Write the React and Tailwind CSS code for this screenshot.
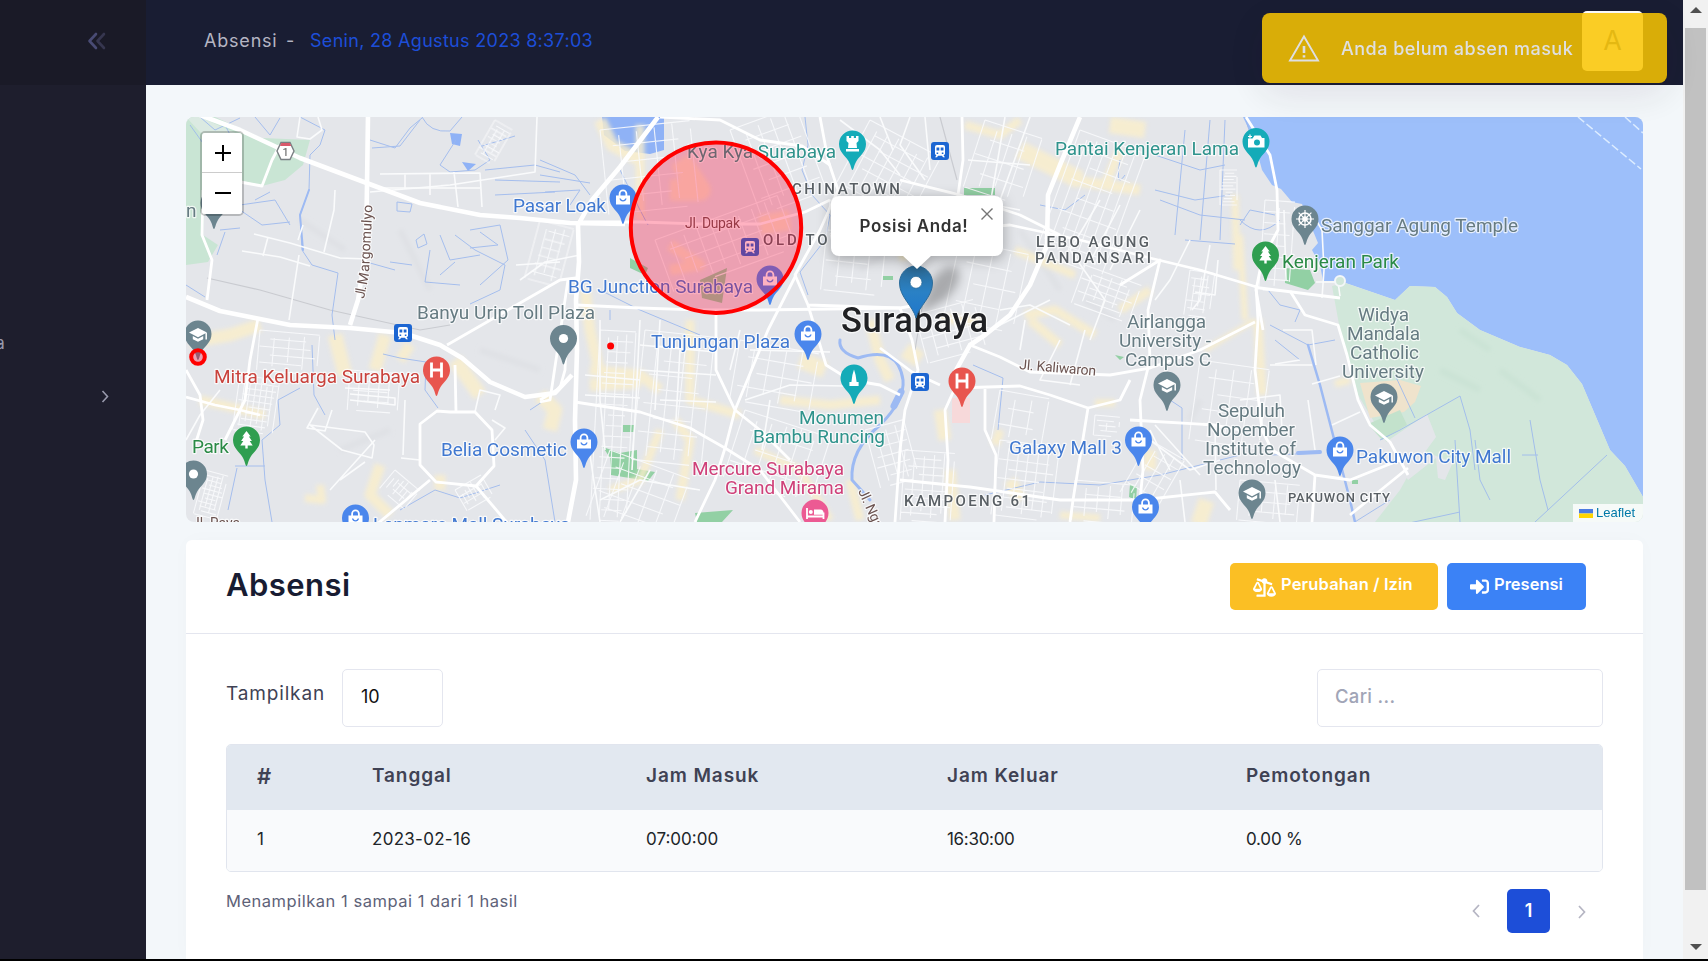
import React from "react";
import { FaBalanceScaleRight, FaSignInAlt } from "react-icons/fa";

/* ---------- map data ---------- */
const COLORS = {
  shop: "#4a86ec",
  teal: "#14abb8",
  red: "#e8554e",
  green: "#2f9e50",
  gray: "#6c858f",
  pink: "#ec5a93",
};

const PINS = [
  [214, 203, "gray", "dot"],
  [623, 198, "shop", "bag"],
  [770, 279, "shop", "bag"],
  [808, 334, "shop", "bag"],
  [584, 442, "shop", "bag"],
  [1138.5, 440, "shop", "bag"],
  [1145.5, 507, "shop", "bag"],
  [1340, 450, "shop", "bag"],
  [355.5, 518, "shop", "bag"],
  [852.5, 144, "teal", "castle"],
  [854, 378, "teal", "tower"],
  [1256, 141.5, "teal", "camera"],
  [436.5, 370, "red", "h"],
  [962, 381, "red", "h"],
  [246.5, 440, "green", "tree"],
  [1265.5, 255, "green", "tree"],
  [563.5, 338.5, "gray", "dot"],
  [193.5, 474, "gray", "dot"],
  [198, 334, "gray", "grad"],
  [1167, 385, "gray", "grad"],
  [1252, 493, "gray", "grad"],
  [1384, 397, "gray", "grad"],
  [1305, 219, "gray", "wheel"],
  [815, 513, "pink", "bed"],
];

const BLUE = "#4078d0";
const TEAL = "#2f938c";
const GRAY = "#667b82";
const DARK = "#595f64";

/* text, x, baseline, width, size, colour, weight */
const LABELS = [
  ["Pasar Loak", 513, 211.5, 93, 19, BLUE, 400],
  ["Kya Kya Surabaya", 687, 157.5, 149, 19, TEAL, 400],
  ["CHINATOWN", 792, 194, 108, 15, DARK, 500],
  ["OLD TOWN", 763, 245, 94, 15, DARK, 500],
  ["Jl. Dupak", 685, 228, 55, 14, "#6b5350", 400],
  ["BG Junction Surabaya", 568, 292.5, 185, 19, BLUE, 400],
  ["Banyu Urip Toll Plaza", 417, 319, 178, 19, GRAY, 400],
  ["Tunjungan Plaza", 651, 348, 139, 19, BLUE, 400],
  ["Monumen", 799, 423.5, 85, 19, TEAL, 400],
  ["Bambu Runcing", 753, 442.5, 132, 19, TEAL, 400],
  ["Mercure Surabaya", 692, 475, 152, 19, "#cf4079", 400],
  ["Grand Mirama", 725, 494, 119, 19, "#cf4079", 400],
  ["KAMPOENG 61", 904, 506, 126, 15, DARK, 500],
  ["LEBO AGUNG", 1036, 247, 113, 15, DARK, 500],
  ["PANDANSARI", 1035, 263, 116, 15, DARK, 500],
  ["Pantai Kenjeran Lama", 1055, 155, 184, 19, TEAL, 400],
  ["Sanggar Agung Temple", 1321, 232, 197, 19, GRAY, 400],
  ["Kenjeran Park", 1282, 268, 117, 19, "#2a8a46", 400],
  ["Airlangga", 1127, 328, 79, 19, GRAY, 400],
  ["University -", 1119, 347, 92, 19, GRAY, 400],
  ["Campus C", 1125, 366, 86, 19, GRAY, 400],
  ["Widya", 1358, 321, 51, 19, GRAY, 400],
  ["Mandala", 1347, 340, 73, 19, GRAY, 400],
  ["Catholic", 1350, 359, 69, 19, GRAY, 400],
  ["University", 1342, 378, 82, 19, GRAY, 400],
  ["Sepuluh", 1218, 417, 67, 19, GRAY, 400],
  ["Nopember", 1207, 436, 88, 19, GRAY, 400],
  ["Institute of", 1205, 455, 91, 19, GRAY, 400],
  ["Technology", 1203, 474, 98, 19, GRAY, 400],
  ["Pakuwon City Mall", 1356, 463, 155, 19, BLUE, 400],
  ["PAKUWON CITY", 1288, 502, 102, 13, DARK, 500],
  ["Galaxy Mall 3", 1009, 454, 113, 19, BLUE, 400],
  ["Belia Cosmetic", 441, 456, 126, 19, BLUE, 400],
  ["Mitra Keluarga Surabaya", 214, 383, 206, 19, "#c9423c", 400],
  ["n", 186, 217, 10, 19, GRAY, 400],
  ["Park", 192, 453, 37, 19, "#2a8a46", 400],
  ["Lenmarc Mall Surabaya", 373, 531, 197, 19, BLUE, 400],
  ["Jl. Raya", 192, 528, 48, 14, "#6b5350", 400],
];

const STATIONS = [[403, 333], [750, 247], [940, 151], [920, 382]];

const HIGHWAYS = [
  "M200 115 L240 130 L300 158 L372 185 L420 203 L480 215 L520 218 L570 223 L625 224",
  "M368 115 L367 185 L366 250 L358 300 L350 325",
  "M186 297 L220 311 L255 318 L290 325 L350 328 L403 333 L440 345 L462 358 L490 382 L525 397 L555 393 L572 375",
  "M658 117 L620 167 L592 200 L578 225 L579 262 L576 300 L577 350 L575 420 L576 480 L568 522",
  "M1080 117 L1060 165 L1048 195 L1047 245 L1030 285 L1010 315 L985 335 L970 345 L955 372",
];

const MAJOR = [
  "M450 412 L475 412 L492 430 L494 466 L476 486 L436 482 L420 465 L420 424 L437 411 Z",
  "M476 486 L520 538",
  "M430 480 L370 530",
  "M447 345 L560 280 L576 278",
  "M456 411 L455 365",
  "M962 117 L963 160 L958 195 L952 230",
  "M820 117 L828 160 L838 190 L820 230 L795 275 L808 305 L900 308 L912 306",
  "M576 305 L640 308 L700 310 L760 310 L900 308",
  "M660 117 L720 120 L760 140 L802 146 L830 165",
  "M578 222 L640 222 L700 224 L760 224 L805 212 L830 200",
  "M716 313 L716 370 L735 410 L726 445 L715 480 L695 522",
  "M796 275 L768 330 L735 410",
  "M735 410 L760 430 L790 460",
  "M575 402 L640 412 L690 428 L725 448 L760 470 L800 522",
  "M808 305 L826 365 L850 380 L880 385 L900 395",
  "M900 308 L912 340 L918 370 L905 410 L900 450 L895 522",
  "M952 230 L1010 225 L1080 240 L1150 258 L1200 270 L1260 288 L1340 298",
  "M900 180 L960 195 L1020 215 L1060 235",
  "M1120 285 L1160 260 L1148 310 L1150 360 L1140 400 L1143 470 L1140 500",
  "M1256 285 L1258 320 L1255 370 L1262 430 L1272 450",
  "M1246 117 L1270 155 L1277 190 L1278 230 L1262 260 L1256 290 L1263 330",
  "M1290 291 L1305 315 L1338 325 L1347 355 L1358 400 L1370 425 L1390 442 L1408 475",
  "M970 345 L1000 357 L1030 372 L1110 375 L1150 368 L1200 350 L1255 322",
  "M955 388 L1020 386 L1050 395 L1088 408 L1073 500 L1070 522",
  "M955 388 L945 410 L948 460 L945 522",
  "M985 389 L985 430 L996 455 L994 522",
  "M880 348 L912 372 L940 385",
  "M900 480 L970 487 L1060 500 L1140 500 L1215 492 L1230 510",
  "M1130 420 L1215 425 L1240 430",
  "M1088 408 L1120 400 L1130 380",
  "M1272 450 L1315 475 L1350 480 L1405 458",
  "M1315 475 L1312 522",
  "M1350 515 L1408 468",
  "M186 397 L215 405 L240 410 L260 415",
  "M186 370 L200 395 L203 420 L195 445",
  "M203 190 L202 235 L212 260 L207 300",
  "M240 182 L262 186 L272 160 L280 145",
  "M258 318 L250 360 L245 400 L225 440",
  "M568 280 L550 400 L540 402",
  "M540 400 L560 388 L565 370 L566 345",
];

const MINOR = [
  "M370 192 L450 185 L535 172 L537 117",
  "M380 174 L480 173 L482 207 M405 174 L405 189 M430 174 L430 195 M454 172 L458 207 M380 188 L480 188",
  "M300 117 L297 137 L310 139 L322 130 L318 117",
  "M254 234 L290 243 L340 258 L368 259 M268 237 L263 256 M242 251 L280 257 L310 266",
  "M335 190 L334 210 L324 252 M303 225 L298 240 M299 255 L289 320",
  "M520 280 L545 262 L580 255 M516 265 L560 262",
  "M310 425 L365 432 L374 445 L372 458 L342 450 Z M318 408 L307 428 L325 431 L332 410",
  "M405 400 L403 455 M401 458 L420 460 M390 390 L345 388 M350 394 L395 398 L395 405 L350 400",
  "M475 412 L480 390 L500 395 L495 410 M492 420 L505 428 L495 440",
  "M340 480 L365 462 M330 490 L375 440 M186 440 L200 415 L220 390",
  "M640 320 L636 400 L632 470 M660 320 L655 410 M680 350 L676 420 M600 320 L600 400 L605 450",
  "M585 375 L640 380 M585 395 L640 398 M640 345 L716 352 M640 370 L716 375 M660 400 L716 402",
  "M740 330 L730 370 M750 350 L830 352 M745 400 L790 385 L845 386 M770 400 L762 450",
  "M600 500 L640 480 L700 490 M620 522 L650 470 M590 455 L600 522",
  "M900 175 L880 150 L840 120 M880 117 L893 150 M910 117 L900 145 L925 180 M925 117 L930 170",
  "M968 200 L1020 210 M968 160 L1030 165 M1005 117 L990 205 M1030 117 L1000 200",
  "M1100 200 L1070 250 L1105 300 L1090 340 M1120 205 L1090 262 M1140 210 L1110 270",
  "M1190 240 L1170 280 L1155 300 M1210 245 L1200 300 L1192 310 M1195 292 L1215 295 L1218 260",
  "M1000 310 L1030 305 L1070 325 M1020 350 L1025 320 M990 330 L1050 300",
  "M1060 340 L1040 380 L1080 385 M1070 385 L1085 330",
  "M1150 440 L1190 470 L1220 460 M1150 430 L1170 470 M1155 425 L1200 475",
  "M1180 480 L1185 522 M1215 425 L1216 490 M1240 400 L1280 395 L1282 430",
  "M1300 360 L1275 364 M1312 384 L1340 376 M1332 425 L1360 412 M1308 400 L1315 450",
  "M1322 298 L1324 270 L1322 230 L1310 210 M1284 210 L1286 280 M1316 282 L1338 282 L1340 296",
  "M1283 330 L1312 330 L1316 365 M1270 365 L1312 365 M1275 480 L1280 522",
];

const CANALS = [
  "M309 190 L300 215 L302 250 L312 265 L338 273 L332 315 L335 340",
  "M200 117 L215 130 L240 118 M225 125 L238 150 M190 125 L215 160",
  "M255 117 L270 135 L280 118 M300 117 L325 130 L320 145 L310 155 L309 190",
  "M240 205 L275 200 L290 225 M240 210 L262 225 L290 222 M255 200 L270 192",
  "M370 140 L395 148 L410 128 L422 118 M372 148 L400 146 L420 120",
  "M422 117 Q430 133 450 131 L462 117 M456 140 L440 165 L450 172 L475 170 L490 160 L478 140",
  "M482 146 L515 136 M485 170 L535 165 L560 172 M495 180 L560 182 M495 195 L555 192",
  "M390 262 L412 265 M370 263 L395 270 M225 232 L217 255 M220 230 L240 228",
  "M455 235 L475 250 L505 265 L500 290 L470 304 M430 250 L425 282 L460 285 M440 235 L450 260 L480 255",
  "M470 230 L500 225 L508 260 L480 285 M440 275 L455 262 M480 232 L498 245 L470 248",
  "M540 160 L575 175 L590 195 M540 175 L590 183 M545 192 L580 190 L570 205",
  "M397 202 L412 204 L410 212 L397 211 Z M416 240 L424 234 L427 244 L418 248 Z",
  "M383 354 L400 358 L426 362 L425 390 L438 408",
  "M312 345 L314 395 L325 415 M300 388 L278 400 L280 425 L262 440 L265 480 L272 522",
  "M235 466 L265 466 M237 468 L228 510 M186 285 L205 297",
  "M620 170 L640 210 L648 225 M600 290 L640 310 L700 335 M610 310 L610 320",
  "M805 117 L808 145 L802 170 L812 195 L830 215 L825 240 L800 272 L808 295",
  "M973 365 L1003 378 L998 430 M985 495 L1040 482 L1100 485 L1160 475 L1240 455",
  "M1155 155 L1200 170 L1225 165 M1160 200 L1200 215 L1245 220 M1185 130 L1175 235 M1210 120 L1200 240",
  "M1225 120 L1220 240 M1155 190 L1195 200 L1230 195 M1185 240 L1235 244",
  "M1240 220 Q1260 240 1280 220 M1240 225 L1250 210 L1275 215 M1040 205 L1065 210 L1085 195",
  "M1120 160 Q1115 190 1125 175 M1170 400 L1182 408 L1182 460",
  "M1245 117 L1258 160 M1268 290 L1280 305 L1300 310 L1295 322",
  "M1270 325 L1308 345 L1335 340 M1275 340 L1300 360",
  "M1350 525 L1390 500 M1272 455 L1320 453 M1380 440 L1400 430 L1460 396 L1470 430 L1475 470",
  "M1455 440 L1460 522 M1475 440 L1480 480 L1490 500 M1530 420 L1540 480 L1548 510 L1607 455",
  "M1522 455 L1538 455 M1400 525 L1460 512 M1548 510 L1535 522 M1395 375 L1415 418",
  "M400 510 L435 490 L460 498 L500 485 M530 410 L545 400 M525 430 L545 460 L555 522",
];

/* dense residential blocks: x, y, width, height, angle, columns, rows */
const BLOCKS = [
  [240, 375, 40, 55, 8, 7, 9],
  [205, 470, 24, 45, 15, 5, 10],
  [260, 330, 60, 40, 5, 4, 5],
  [350, 370, 50, 40, 4, 5, 4],
  [395, 470, 32, 24, 40, 7, 3],
  [455, 490, 30, 24, -30, 7, 3],
  [495, 120, 20, 40, 30, 3, 9],
  [540, 220, 35, 60, 15, 4, 7],
  [600, 330, 36, 190, 3, 4, 18],
  [645, 330, 70, 130, 6, 5, 9],
  [740, 340, 80, 60, 10, 5, 4],
  [745, 410, 90, 70, 18, 6, 4],
  [610, 450, 85, 70, 20, 5, 5],
  [600, 130, 90, 85, -6, 5, 5],
  [730, 130, 70, 90, -20, 5, 6],
  [655, 240, 130, 55, -20, 9, 4],
  [830, 200, 60, 90, 6, 4, 6],
  [870, 120, 80, 70, 28, 7, 6],
  [985, 120, 60, 70, 18, 4, 4],
  [1080, 130, 70, 130, 20, 7, 8],
  [1085, 265, 60, 40, 20, 6, 6],
  [1220, 170, 17, 35, 0, 1, 11],
  [1190, 270, 25, 45, 8, 4, 6],
  [960, 240, 70, 80, 12, 4, 4],
  [915, 315, 60, 50, -15, 5, 4],
  [1000, 390, 50, 50, 10, 3, 3],
  [1095, 415, 25, 20, 5, 2, 4],
  [905, 450, 50, 70, 4, 5, 9],
  [1000, 440, 60, 75, 7, 6, 8],
  [1150, 440, 40, 60, 30, 4, 5],
  [1200, 360, 70, 80, 8, 4, 5],
  [1265, 200, 30, 90, 4, 2, 8],
  [1240, 480, 60, 40, 5, 5, 4],
  [865, 430, 40, 60, -15, 4, 6],
  [1075, 480, 60, 40, 5, 5, 3],
];

/* commercial strips: points, width */
const STRIPS = [
  ["M190 342 L230 335 L260 325", 14], ["M335 335 L345 375", 16], ["M385 335 L375 370", 14],
  ["M410 345 L400 360", 12], ["M455 360 L480 395", 16], ["M200 400 L265 415", 10],
  ["M380 465 L370 495 L390 515", 12], ["M320 485 L322 500 L305 498", 9], ["M540 395 L555 410 L550 430", 16],
  ["M440 475 L440 490", 12], ["M600 120 L612 145 L640 160", 14], ["M680 160 L700 190 L670 190", 24],
  ["M640 125 L640 220", 10], ["M670 245 L700 265 L670 270", 12], ["M760 225 L790 220", 22],
  ["M585 290 L590 330 L600 375", 12], ["M590 370 L640 375 L660 390", 12], ["M590 385 L640 382", 14],
  ["M690 320 L690 400 L740 415", 10], ["M610 490 L640 480 L660 430", 9], ["M800 360 L825 370", 18],
  ["M780 400 L830 405 L880 400", 10], ["M755 450 L800 470 L830 520", 9], ["M870 320 L880 360 L890 380", 12],
  ["M675 420 L690 440 L680 500", 10], ["M905 350 L920 360", 18], ["M895 210 L905 260", 12],
  ["M965 125 L1000 135 L1020 120", 9], ["M1020 150 L1060 170 L1080 180", 20], ["M1110 125 L1145 130", 18],
  ["M1070 180 L1140 190", 12], ["M1120 150 L1105 185", 10], ["M1015 250 L1075 275", 9],
  ["M1030 320 L1060 345 M1025 315 L1055 310 L1095 335", 10], ["M1120 310 L1150 290", 10],
  ["M1095 403 L1115 403", 8], ["M940 410 L945 440", 14], ["M1000 430 L995 445", 10],
  ["M950 470 L955 520", 12], ["M1010 480 L1020 500", 14], ["M1150 450 L1150 470", 14],
  ["M1195 510 L1210 515", 28], ["M1235 195 L1237 270", 8], ["M1258 320 L1262 395", 10],
  ["M1255 320 L1205 350", 6], ["M1335 384 L1350 380", 8], ["M1060 515 L1100 518", 8],
  ["M1240 235 L1245 320", 7], ["M940 318 L980 322", 10], ["M850 480 L860 520", 10],
];

function Glyph({ kind }) {
  const w = { fill: "#fff" };
  const s = { fill: "none", stroke: "#fff", strokeWidth: 1.8 };
  if (kind === "bag")
    return (
      <g>
        <path d="M-3.4 -2 V-4.2 A3.4 3.4 0 0 1 3.4 -4.2 V-2" {...s} />
        <path d="M-7 -2.6 H7 V6.5 H-7 Z M-3.6 0.6 A3.7 3.7 0 0 0 3.6 0.6 L2.2 0.6 A2.3 2.3 0 0 1 -2.2 0.6 Z" fillRule="evenodd" {...w} />
      </g>
    );
  if (kind === "castle")
    return <path d="M-6 -8 H-3.5 V-6 H-1.3 V-8 H1.3 V-6 H3.5 V-8 H6 V-3 L4 -1 L4.5 4 H-4.5 L-4 -1 L-6 -3 Z M-6.5 5 H6.5 V7.5 H-6.5 Z" {...w} />;
  if (kind === "tower")
    return <path d="M0 -8.5 L1.6 -3 L2.6 4 H4.6 V8 H-4.6 V4 H-2.6 L-1.6 -3 Z" {...w} />;
  if (kind === "camera")
    return (
      <g>
        <path d="M-8 -3 H-3.5 L-1.5 -6 H4.5 L6 -3.5 H8.5 V6 H-8 Z" {...w} />
        <circle cx="1" cy="1" r="3" fill="#14abb8" />
        <path d="M-6 -7 V-3 M-8 -5 H-4" stroke="#fff" strokeWidth="1.2" />
      </g>
    );
  if (kind === "h")
    return <path d="M-5 -7.5 V7.5 M5 -7.5 V7.5 M-5 0 H5" fill="none" stroke="#fff" strokeWidth="2.8" />;
  if (kind === "tree")
    return <path d="M0 -9 L4.2 -3.5 H2.4 L5.4 1 H3.2 L6.2 5.5 H1.2 V8.5 H-1.2 V5.5 H-6.2 L-3.2 1 H-5.4 L-2.4 -3.5 H-4.2 Z" {...w} />;
  if (kind === "grad")
    return (
      <g>
        <path d="M0 -6 L9 -1.4 L0 3.2 L-9 -1.4 Z" {...w} />
        <path d="M-5.2 2 L0 4.7 L5.2 2 V5.2 L0 7.8 L-5.2 5.2 Z" {...w} />
        <path d="M8.2 -1 V5.4" stroke="#fff" strokeWidth="1.5" />
      </g>
    );
  if (kind === "wheel")
    return (
      <g fill="none" stroke="#fff" strokeWidth="1.6">
        <circle r="6" />
        <circle r="2" />
        <path d="M0 -9 V9 M-9 0 H9 M-6.4 -6.4 L6.4 6.4 M-6.4 6.4 L6.4 -6.4" strokeWidth="1.2" />
      </g>
    );
  if (kind === "bed")
    return (
      <g>
        <path d="M-8 -5 V6 M-8 3.5 H8.5 V6 M8.5 4 V-0.5" fill="none" stroke="#fff" strokeWidth="1.8" />
        <circle cx="-4.2" cy="-1" r="2" {...w} />
        <path d="M-1 -3.5 H5.5 Q8.5 -3.5 8.5 0 V1.8 H-1 Z" {...w} />
      </g>
    );
  return <circle r="4.6" {...w} />;
}

function Pin({ x, y, color, kind }) {
  return (
    <g transform={`translate(${x} ${y})`}>
      <path
        d="M0 26 C-1.2 26 -1.3 21.5 -4 17 C-7.2 11.8 -13.5 8.2 -13.5 0 A13.5 13.5 0 0 1 13.5 0 C13.5 8.2 7.2 11.8 4 17 C1.3 21.5 1.2 26 0 26 Z"
        fill={COLORS[color]}
      />
      <Glyph kind={kind} />
    </g>
  );
}

function Block({ b }) {
  const [x, y, w, h, a, c, r] = b;
  let d = "";
  for (let i = 0; i <= c; i++) {
    const px = (w * i) / c;
    d += `M${px} ${(i * 7) % 9} V${h - ((i * 5) % 11)} `;
  }
  for (let j = 0; j <= r; j++) {
    const py = (h * j) / r;
    d += `M${(j * 11) % (w * 0.35)} ${py} H${w - ((j * 13) % (w * 0.3))} `;
  }
  return <path d={d} transform={`translate(${x} ${y}) rotate(${a})`} />;
}

function CityMap() {
  return (
    <svg viewBox="186 117 1457 405" className="block h-[405px] w-[1457px]" fontFamily="Roboto, sans-serif">
      <defs>
        <filter id="soft" x="-5%" y="-5%" width="110%" height="110%"><feGaussianBlur stdDeviation="2" /></filter>
        <filter id="shade" x="-50%" y="-50%" width="200%" height="200%"><feGaussianBlur stdDeviation="5" /></filter>
        <linearGradient id="marker" x1="0" y1="0" x2="0" y2="1">
          <stop offset="0" stopColor="#2e6c97" />
          <stop offset="0.5" stopColor="#2a81c5" />
          <stop offset="1" stopColor="#1f77cc" />
        </linearGradient>
      </defs>
      <rect x="186" y="117" width="1457" height="405" fill="#e4e6ea" />

      {/* vegetation */}
      <path d="M186 117 H215 L262 138 L310 140 L303 165 L285 180 L262 186 L240 180 L205 190 L203 235 L218 245 L208 262 L186 265 Z" fill="#c9e5d4" />
      <path d="M186 117 L200 117 L240 135 L225 150 L200 132 Z" fill="#dbeae2" />
      <g fill="#92d0a4">
        <path d="M603 447 L620 453 L637 450 L637 469 L655 472 L648 481 L611 475 L610 458 Z" />
        <path d="M623 425 H635 V432 H623 Z M695 513 L733 510 L722 522 H697 Z M964 188 H995 V195 H964 Z" />
        <path d="M630 258 L648 268 L645 275 L630 268 Z M700 280 L727 268 L722 303 L702 298 Z M883 276 H893 V280 H883 Z" />
        <path d="M1130 484 L1137 487 L1136 500 L1129 497 Z M1115 355 L1124 357 L1120 360 Z M1352 480 H1358 V484 H1352 Z" />
        <path d="M1285 268 L1310 270 L1315 283 L1308 290 L1285 283 Z" />
      </g>

      {/* sea and mangrove */}
      <path d="M1243 117 L1254 140 L1262 170 L1272 185 L1281 189 L1292 202 L1302 204 L1318 243 L1312 250 L1320 265 L1323 281 L1340 281 L1395 300 L1410 286 L1435 287 L1447 297 L1457 313 L1480 330 L1520 347 L1550 355 L1567 365 L1582 384 L1610 450 L1625 466 L1643 497 V117 Z" fill="#9dbffa" />
      <path d="M1332 286 L1345 283 L1395 300 L1410 286 L1435 287 L1447 297 L1457 313 L1480 330 L1520 347 L1550 355 L1567 365 L1582 384 L1610 450 L1625 466 L1643 497 V522 H1375 L1400 490 L1410 472 L1385 440 L1358 395 L1340 330 Z" fill="#d1e7da" />
      <path d="M1360 383 L1400 380 L1421 386 L1415 402 L1404 412 L1370 418 Z" fill="#efe3cc" />
      <path d="M1368 424 L1400 410 L1407 425 L1382 440 Z" fill="#c3e2cc" />
      <path d="M1386 442 L1427 414 L1436 437 L1425 452 L1453 462 L1445 480 L1438 478 L1436 458 L1408 480 Z" fill="#e4e6ea" />
      <path d="M602 117 H664 V150 L650 154 L625 151 L604 135 Z M450 133 L462 134 L460 146 L452 144 Z M462 162 L476 164 L468 171 Z" fill="#8fb2f6" />
      <path d="M952 398 H970 V423 H952 Z" fill="#f7d9da" />

      {/* relief shading */}
      <g filter="url(#soft)" fill="none" stroke="#dfe1e5" strokeWidth="6">
        <path d="M300 220 L345 250 M400 230 L430 290 M480 350 L540 370 M340 450 L390 430 M1020 230 L1060 290 M1085 300 L1115 320 M1190 420 L1200 400 M860 270 L890 250" />
        <path d="M1440 370 L1480 390 M1500 370 L1540 400 M1460 330 L1490 350" stroke="#cbe3d5" />
      </g>

      <g fill="none" stroke="#fbefca" strokeLinejoin="round" opacity="0.8" filter="url(#soft)">
        {STRIPS.map(([d, w], i) => <path key={i} d={d} strokeWidth={w * 0.9} />)}
      </g>
      <path d="M207 278 L260 290 L330 310 L420 330 L450 325 M940 117 L957 180 M925 290 L915 350" fill="none" stroke="#c9cbd0" strokeWidth="1.2" />

      <g fill="none" stroke="#9ab7ee" strokeWidth="1" strokeLinejoin="round" opacity="0.85">
        {CANALS.map((d, i) => <path key={i} d={d} />)}
      </g>
      <g fill="none" stroke="#9dbaf3" strokeLinecap="round">
        <path d="M1308 345 L1320 385 L1333 435 L1350 500 L1355 522" strokeWidth="2.5" />
        <path d="M1298 453 L1320 452" strokeWidth="4" />
        <path d="M840 340 Q838 352 858 358 Q898 345 903 380 Q905 400 880 425 Q850 450 852 480 L870 500" strokeWidth="3" />
        <path d="M901 392 L894 406" strokeWidth="7" />
        <path d="M309 190 L300 215 L303 250" strokeWidth="2" />
      </g>

      <g fill="none" stroke="#f9fafc" strokeWidth="1.1" opacity="0.9">
        {BLOCKS.map((b, i) => <Block key={i} b={b} />)}
      </g>
      <g fill="none" stroke="#fafbfc" strokeWidth="1.6" strokeLinejoin="round">
        {MINOR.map((d, i) => <path key={i} d={d} />)}
      </g>
      <g fill="none" stroke="#fff" strokeWidth="2.8" strokeLinejoin="round">
        {MAJOR.map((d, i) => <path key={i} d={d} />)}
      </g>
      <g fill="none" stroke="#fff" strokeWidth="4.6" strokeLinejoin="round">
        {HIGHWAYS.map((d, i) => <path key={i} d={d} />)}
      </g>
      <circle cx="1340" cy="281" r="5" fill="#d1e7da" stroke="#f4f7f9" strokeWidth="2" />
      <path d="M1578 117 L1641 169 M1625 117 L1643 133" stroke="#dcecff" strokeWidth="1.5" strokeDasharray="8 3" fill="none" />

      {/* places */}
      {PINS.map(([x, y, c, k], i) => <Pin key={i} x={x} y={y} color={c} kind={k} />)}
      {STATIONS.map(([x, y], i) => (
        <g key={i} transform={`translate(${x} ${y})`}>
          <rect x="-9" y="-9" width="18" height="18" rx="3" fill="#1c66d2" />
          <path d="M-5 -4 Q-5 -6 -3 -6 H3 Q5 -6 5 -4 V3 L3.6 4.4 L5 6.2 H3 L2 4.8 H-2 L-3 6.2 H-5 L-3.6 4.4 L-5 3 Z M-3.5 -3.6 V-0.4 H-0.7 V-3.6 Z M0.7 -3.6 V-0.4 H3.5 V-3.6 Z M-3.4 1.4 V3 H-1.8 V1.4 Z M1.8 1.4 V3 H3.4 V1.4 Z" fill="#fff" fillRule="evenodd" />
        </g>
      ))}
      <path d="M281 142.5 H290 L294 151 L290 159.5 H281 L277 151 Z" fill="#fff" stroke="#7a7f83" strokeWidth="1.4" />
      <path d="M281.3 143 H289.8 L291.2 146 H280 Z" fill="#d9596b" />
      <text x="285.5" y="155.5" fontSize="11" textAnchor="middle" fill="#555">1</text>

      <g stroke="#fff" strokeOpacity="0.75" strokeWidth="2.4" strokeLinejoin="round" paintOrder="stroke">
        {LABELS.map(([t, x, y, w, s, c, wt]) => (
          <text key={t + x} x={x} y={y} textLength={w} fontSize={s} fill={c} fontWeight={wt}>{t}</text>
        ))}
        <text transform="translate(1019 369) rotate(5)" textLength="77" fontSize="14" fill="#6b5350">Jl. Kaliwaron</text>
        <text transform="translate(364 299) rotate(-79)" textLength="26" fontSize="14" fill="#6b5350">Jl. M</text>
        <text transform="translate(369 272) rotate(-87)" textLength="67" fontSize="14" fill="#6b5350">argomulyo</text>
        <text transform="translate(858 491) rotate(66)" textLength="60" fontSize="14" fill="#6b5350">Jl. Ngagel</text>
        <text x="841" y="332" textLength="147" fontSize="34.5" fontWeight="500" fill="#202124">Surabaya</text>
      </g>

      {/* attendance zones */}
      <g stroke="#f00" strokeWidth="4" fill="#f03" fillOpacity="0.3">
        <circle cx="716" cy="227.7" r="85.2" />
        <circle cx="198" cy="357" r="6.8" />
      </g>
      <circle cx="610.6" cy="346" r="3.5" fill="#f00" />

      {/* own position */}
      <path d="M918 315 L932 280 Q945 262 958 268 Q964 282 945 300 Z" fill="#000" opacity="0.26" filter="url(#shade)" />
      <path d="M916 318 C913 306 899.5 297 899.500 283 A16.500 17 0 0 1 932.500 283 C932.500 297 919 306 916 318 Z" fill="url(#marker)" stroke="#2b6c9b" strokeWidth="1" />
      <circle cx="916" cy="282.300" r="6" fill="#fff" stroke="#2b6c9b" strokeWidth="0.8" />
    </svg>
  );
}

function MapPanel() {
  return (
    <section className="relative h-[405px] w-[1457px] overflow-hidden rounded-lg">
      <CityMap />
      <div className="absolute left-[14px] top-[14px] flex w-[44px] flex-col rounded-[5px] border-2 border-black/20 bg-clip-padding">
        <button className="flex h-[40px] items-center justify-center rounded-t-[3px] border-b border-[#ccc] bg-white pl-[2px]">
          <svg viewBox="0 0 16 16" className="size-4"><path d="M0 8H16M8 0V16" stroke="#000" strokeWidth="2" shapeRendering="crispEdges" /></svg>
        </button>
        <button className="flex h-[41px] items-center justify-center rounded-b-[3px] bg-white pb-[2px] pl-[2px]">
          <svg viewBox="0 0 16 16" className="size-4"><path d="M0 8H16" stroke="#000" strokeWidth="2" shapeRendering="crispEdges" /></svg>
        </button>
      </div>
      <div className="absolute left-[645px] top-[79px] flex w-[172px] flex-col items-center drop-shadow-[0_3px_7px_rgba(0,0,0,0.3)]">
        <div className="flex h-[60px] w-full items-center justify-center rounded-lg bg-white">
          <span className="-ml-[6px] whitespace-nowrap pt-[2px] text-[17px] font-semibold tracking-[0.600px] text-[#333]">Posisi Anda!</span>
        </div>
        <svg viewBox="0 0 30 14" className="-mt-px h-[14px] w-[30px]"><path d="M0 0H30L15 14Z" fill="#fff" /></svg>
        <svg viewBox="0 0 12 12" className="absolute right-[10px] top-[12px] size-3"><path d="M0.500 0.500L11.500 11.500M11.500 0.500L0.500 11.500" stroke="#757575" strokeWidth="1.400" /></svg>
      </div>
      <div className="absolute bottom-0 right-0 flex h-[18px] w-[70px] items-center gap-[3px] bg-white/80 pl-[6px] font-['Liberation_Sans',sans-serif] text-[#0078a8]">
        <svg viewBox="0 0 14 9" className="h-[9px] w-[14px]"><path d="M0 0H14V4.500H0Z" fill="#4c7be1" /><path d="M0 4.500H14V9H0Z" fill="#ffd500" /></svg>
        <span className="text-[13px]">Leaflet</span>
      </div>
    </section>
  );
}

function Sidebar() {
  return (
    <aside className="flex h-full w-[146px] shrink-0 flex-col bg-[#1e1e2d]">
      <div className="flex h-[85px] items-center bg-[#1a1a27] pb-[3px] pl-[87px]">
        <svg viewBox="0 0 19 18" className="h-[18px] w-[19px]" fill="none" strokeWidth="2.600" strokeLinecap="round" strokeLinejoin="round">
          <path d="M17 2L10.500 9L17 16" stroke="#36364f" />
          <path d="M9 2L2.500 9L9 16" stroke="#494b74" />
        </svg>
      </div>
      <div className="mt-[246px] flex h-[24px] items-center overflow-hidden text-[17.500px] text-[#9899ac]">
        <span className="-ml-[5px]">a</span>
      </div>
      <div className="mt-[30px] flex h-[22px] items-center pl-[101px]">
        <svg viewBox="0 0 8 13" className="h-[13px] w-[8px]" fill="none"><path d="M1.500 1L6.500 6.500L1.500 12" stroke="#9899ac" strokeWidth="1.600" /></svg>
      </div>
    </aside>
  );
}

const ROWS = [
  { no: "1", date: "2023-02-16", start: "07:00:00", end: "16:30:00", cut: "0.00 %" },
];

function AttendanceCard() {
  const cols = "grid grid-cols-[115px_274px_301px_299px_1fr] items-center pl-[30px]";
  return (
    <section className="mt-[18px] flex w-[1457px] grow flex-col rounded-t-md bg-white shadow-[0_0_20px_rgba(76,87,125,0.02)]">
      <header className="flex h-[94px] shrink-0 items-center justify-between border-b border-[#e4e6ef] pl-[40px] pr-[57px]">
        <h1 className="pb-[3px] text-[31px] font-semibold tracking-[0.450px] text-[#181c32]">Absensi</h1>
        <div className="flex gap-[9px]">
          <button className="flex h-[47px] w-[208px] items-center gap-[5px] rounded-[5px] bg-[#fbbf24] pl-[23px] text-[16.500px] font-semibold text-white">
            <FaBalanceScaleRight className="mt-[1px] h-[19px] w-[23px]" />
            <span className="whitespace-nowrap pb-[4px] tracking-[0.150px]">Perubahan / Izin</span>
          </button>
          <button className="flex h-[47px] w-[139px] items-center gap-[5px] rounded-[5px] bg-[#3b82f6] pl-[23px] text-[16.500px] font-semibold text-white">
            <FaSignInAlt className="size-[19px]" />
            <span className="whitespace-nowrap pb-[4px]">Presensi</span>
          </button>
        </div>
      </header>
      <div className="flex flex-col px-[40px] pt-[35px]">
        <div className="flex justify-between">
          <div className="flex">
            <span className="w-[116px] pt-[11px] text-[19px] tracking-[0.850px] text-[#3f4254]">Tampilkan</span>
            <div className="flex h-[58px] w-[101px] items-center rounded-[5px] border border-[#e4e6ef] pb-[4px] pl-[18px] text-[18px] text-[#111]">10</div>
          </div>
          <div className="flex h-[58px] w-[286px] items-center rounded-[5px] border border-[#e4e6ef] pb-[3px] pl-[17px] text-[18.500px] font-medium tracking-[0.300px] text-[#a1a5b7]">Cari ...</div>
        </div>
        <div className="mt-[17px] overflow-hidden rounded-[5px] border border-[#e1e5ee]">
          <div className={cols + " h-[65px] bg-[#e2e8f0] pb-[2px] text-[19px] font-semibold tracking-[0.900px] text-[#3f4254]"}>
            <span className="text-[22px]">#</span><span>Tanggal</span><span>Jam Masuk</span><span>Jam Keluar</span><span>Pemotongan</span>
          </div>
          {ROWS.map((r) => (
            <div key={r.no} className={cols + " h-[61px] bg-[#f9fafc] pb-[1px] text-[17px] text-[#212529]"}>
              <span>{r.no}</span>
              <span className="tracking-[0.280px]">{r.date}</span>
              <span>{r.start}</span>
              <span className="tracking-[-0.300px]">{r.end}</span>
              <span className="tracking-[-0.200px]">{r.cut}</span>
            </div>
          ))}
        </div>
        <div className="flex justify-between">
          <p className="mt-[17px] text-[16.500px] tracking-[0.520px] text-[#5e6278]">Menampilkan 1 sampai 1 dari 1 hasil</p>
          <div className="mt-[17px] flex items-center pr-[17px]">
            <svg viewBox="0 0 8 14" className="h-[14px] w-[8px]" fill="none"><path d="M7 1L1.500 7L7 13" stroke="#b5b5c3" strokeWidth="1.700" /></svg>
            <span className="ml-[27px] flex h-[44px] w-[43px] items-center justify-center rounded-[5px] bg-[#1d4ed8] pb-[2px] text-[18px] font-semibold text-white">1</span>
            <svg viewBox="0 0 8 14" className="ml-[28px] mt-[2px] h-[14px] w-[8px]" fill="none"><path d="M1 1L6.500 7L1 13" stroke="#b5b5c3" strokeWidth="1.700" /></svg>
          </div>
        </div>
      </div>
    </section>
  );
}

export default function App() {
  return (
    <div className="relative flex h-[961px] w-[1708px] flex-col overflow-hidden bg-black font-[Inter,sans-serif]">
      <div className="flex h-[959px] overflow-hidden">
        <Sidebar />
        <div className="flex w-[1537px] shrink-0 flex-col bg-[#f3f7fa]">
          <header className="flex h-[85px] shrink-0 items-center justify-between bg-[#191d33] pl-[58px] pr-[40px]">
            <div className="flex whitespace-nowrap pb-[4px] text-[18px]">
              <span className="w-[82px] tracking-[0.800px] text-[#b5b5c3]">Absensi</span>
              <span className="w-[24px] text-[#b5b5c3]">-</span>
              <span className="tracking-[0.300px] text-[#1d4ed8]">Senin, 28 Agustus 2023 8:37:03</span>
            </div>
            <div className="mb-[3px] flex h-[60px] w-[61px] items-center justify-center rounded-[5px] bg-white text-[27px] text-[#66687a]">A</div>
          </header>
          <main className="flex grow flex-col pl-[40px] pt-[32px]">
            <MapPanel />
            <AttendanceCard />
          </main>
        </div>
        <div className="flex w-[25px] shrink-0 flex-col items-center bg-[#f1f1f1]">
          <svg viewBox="0 0 12 6" className="mt-[7px] h-[6px] w-[12px]"><path d="M0 6L6 0L12 6Z" fill="#505050" /></svg>
          <div className="mt-[15px] h-[862px] w-[21px] bg-[#c1c1c1]" />
          <svg viewBox="0 0 12 6" className="mt-[54px] h-[6px] w-[12px]"><path d="M0 0L6 6L12 0Z" fill="#505050" /></svg>
        </div>
      </div>
      <div className="absolute left-[1262px] top-[13px] flex h-[70px] w-[405px] items-center rounded-lg bg-[#fac502] pl-[26px] text-white opacity-[0.86] shadow-[0_10px_40px_rgba(60,20,60,0.12)]">
        <svg viewBox="0 0 32 28" className="h-[28px] w-[32px]" fill="none">
          <path d="M16 2.500L30 26.500H2Z" stroke="#fff" strokeWidth="1.900" />
          <path d="M16 12V19M16 21.200V23.600" stroke="#fff" strokeWidth="2.600" />
        </svg>
        <span className="ml-[21px] whitespace-nowrap text-[18px] font-medium tracking-[0.480px]">Anda belum absen masuk</span>
      </div>
    </div>
  );
}
